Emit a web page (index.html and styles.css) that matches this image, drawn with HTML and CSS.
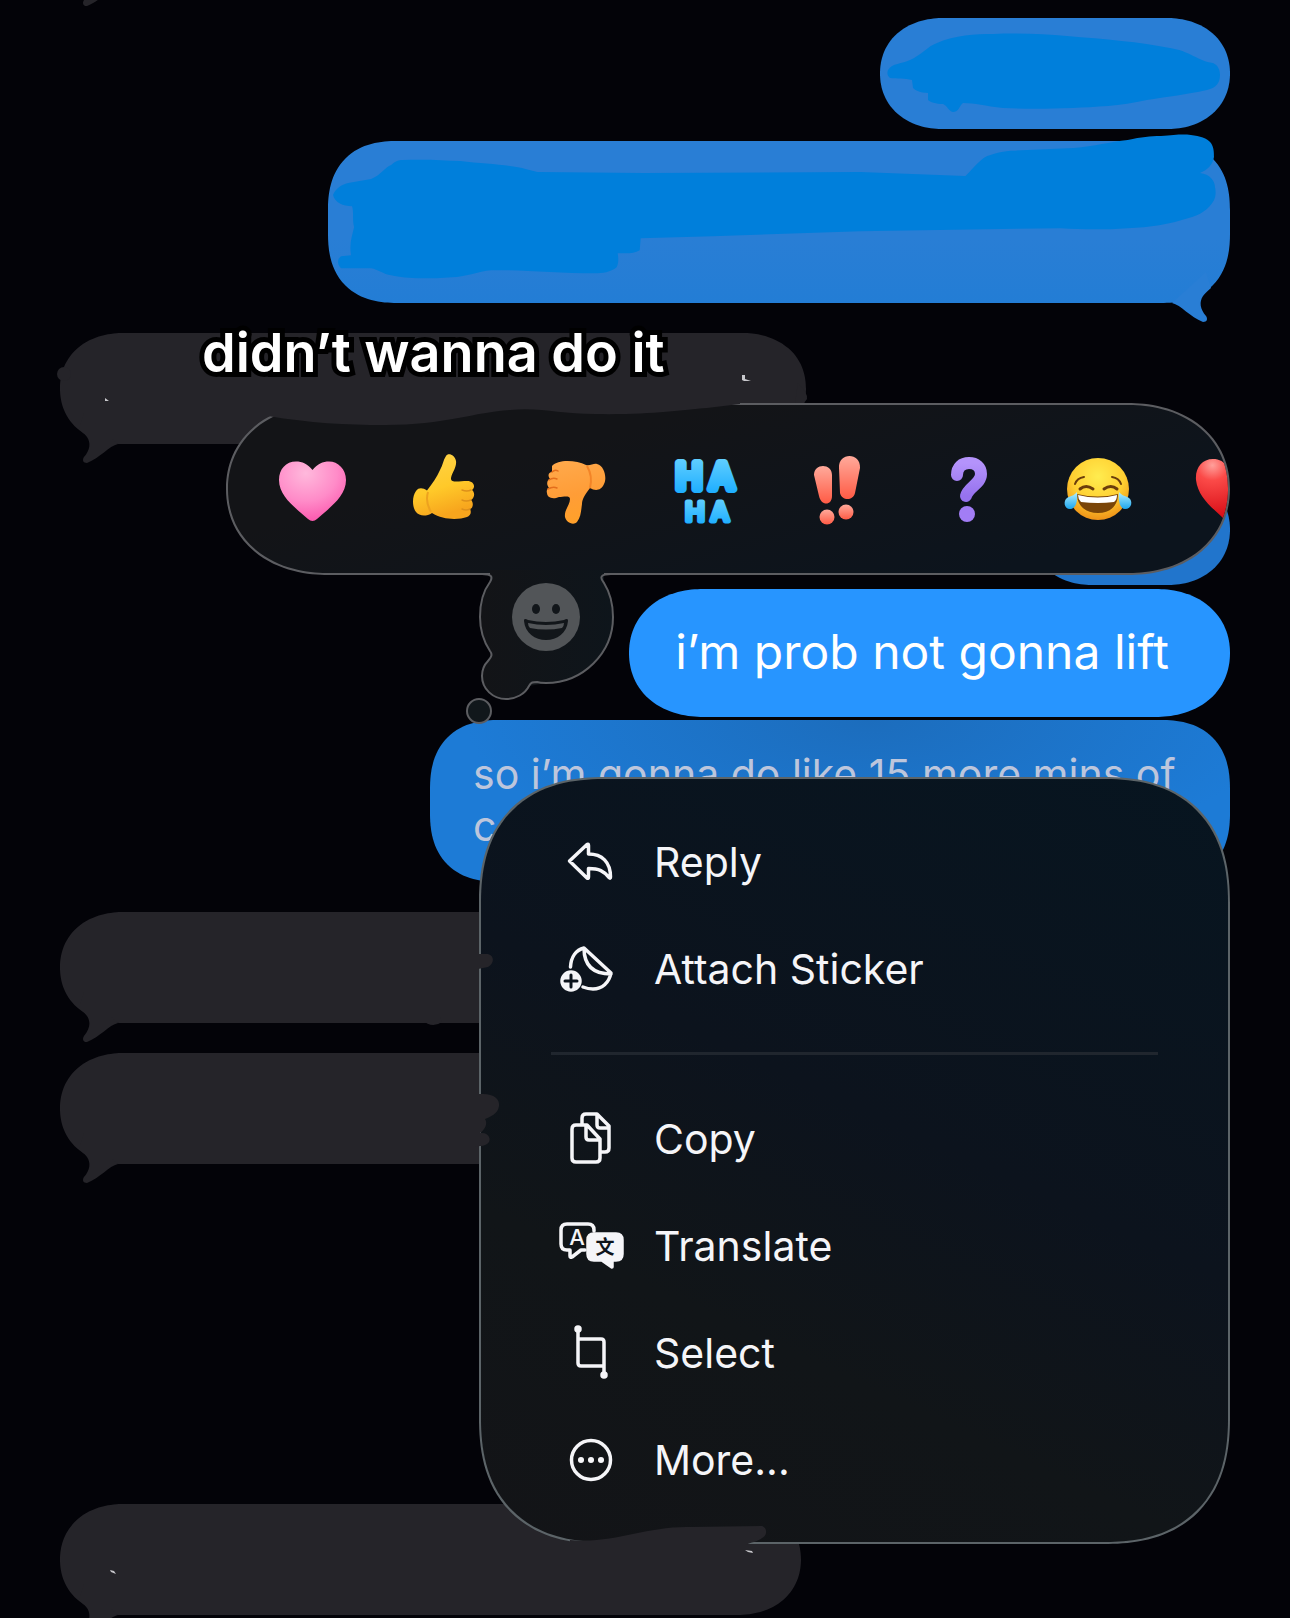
FILE: index.html
```html
<!DOCTYPE html>
<html lang="en">
<head>
    <meta charset="UTF-8">
    <meta name="viewport" content="width=device-width, initial-scale=1.0">
    <title>Messages</title>
    <link rel="stylesheet" href="styles.css">
</head>
<body>
    <!-- Shared tail shape, mirrored for incoming bubbles -->
    <svg class="defs" width="0" height="0" aria-hidden="true">
        <symbol id="tail" viewBox="0 0 60 60">
            <path d="M2 41C11 43 20 55 33 60C37 60 38 57 36 54C30 47 29 40 33 34C35 31 38 29 41 26L36 10Z"/>
        </symbol>
    </svg>

    <main class="chat">
        <svg class="tail tail-top" aria-hidden="true"><use href="#tail"/></svg>

        <div class="bubble out w-short">
            <svg class="scribble" viewBox="0 0 350 110" aria-hidden="true">
                <path d="M8 52C12 45 22 46 30 42C40 38 48 28 57 25C75 17 95 16 113 16C140 15 165 16 187 18C225 21 260 24 290 30C310 33 318 43 333 45C338 47 340 52 340 57C340 65 336 70 327 72C305 77 290 78 267 82C240 88 215 89 193 90C165 91 145 91 123 90C105 88 95 85 83 85C79 88 79 94 73 94C68 93 68 88 63 86C56 86 50 84 48 82V75C40 75 35 72 33 70L32 62C25 60 17 61 10 60C7 57 7 55 8 52Z"/>
            </svg>
        </div>

        <div class="bubble out w-long tall">
            <svg class="scribble" viewBox="0 0 900 162" aria-hidden="true">
                <path d="M5 54C8 47 13 44 20 42L43 38C53 34 57 26 63 24C67 20 71 19 74 19C95 18 114 19 132 20C158 23 186 24 197 28L209 31L315 32L531 31L636 35C645 26 652 16 661 14C675 9 685 10 698 9L744 7C765 5 780 1 798 -1C812 -4 820 -5 831 -5C845 -6 852 -7 861 -6C870 -5 877 -3 881 2C884 7 884 11 884 16C883 24 877 29 870 32C880 33 885 40 885 46C886 50 886 55 884 59C879 68 870 74 858 77C840 83 820 86 798 87C770 89 750 88 731 87L531 90L384 95L312 97L311 109C305 113 297 112 289 112C290 117 290 122 288 126C282 131 274 132 266 132C230 132 190 128 163 129C150 130 136 136 124 136C113 137 104 137 94 137C80 137 72 136 63 134C55 133 50 128 43 127H13C9 123 9 118 13 115L23 114C21 102 24 95 26 86C24 78 26 72 24 65C15 65 7 62 5 54Z"/>
            </svg>
            <svg class="tail" aria-hidden="true"><use href="#tail"/></svg>
        </div>

        <div class="bubble in w-mid spaced">
            <svg class="tail" aria-hidden="true"><use href="#tail"/></svg>
            <svg class="scribble" viewBox="0 0 746 110" aria-hidden="true">
                <path d="M208 83C250 90 285 92 325 92C385 92 415 79 450 77C480 74 500 81 535 81C590 82 620 77 647 75L680 71V50H208Z"/>
                <circle cx="4" cy="41" r="7"/>
                <path d="M738 50Q748 60 747 66L744 70H735Z"/>
                <path class="speck" d="M45 65l4 3h-4zM682 42h3v4l6 2h-7l-2-1z"/>
            </svg>
            <span class="caption">didn’t wanna do it</span>
        </div>

        <div class="bubble out w-tiny spaced"></div>

        <div class="focused">
            <div class="reactions">
                <button aria-label="Love">
                    <svg viewBox="0 0 70 70">
                        <radialGradient id="pink" cx=".4" cy=".2" r=".85"><stop offset="0" stop-color="#ffb9dc"/><stop offset=".55" stop-color="#ff8bc8"/><stop offset="1" stop-color="#fb53ab"/></radialGradient>
                        <path fill="url(#pink)" d="M35.500 16C31 10 25 7.500 19 7.500C9 7.500 2 15 2 26C2 43 20 55 31 65Q35.500 69 40 65C51 55 69 43 69 26C69 15 61 7.500 52 7.500C46 7.500 40 10 35.500 16Z"/>
                    </svg>
                </button>
                <button aria-label="Like">
                    <svg viewBox="0 0 70 70">
                        <linearGradient id="yellow" x1="0" y1="0" x2=".3" y2="1"><stop offset="0" stop-color="#ffd44b"/><stop offset=".6" stop-color="#ffc929"/><stop offset="1" stop-color="#f7a51d"/></linearGradient>
                        <path fill="url(#yellow)" d="M38 2C40-2 47 1 48 7C49 14 43 20 43 25C43 29 52 27 59 27C66 27 68 33 64 36C67 38 67 44 63 46C66 49 65 54 62 55C64 59 62 62 59 63C50 66 35 66 24 59C18 63 11 62 8 58C4 53 4 42 8 37C11 33 15 34 19 36.500C24 30 29 23 32 16C35 11 35 6 38 2Z"/>
                        <path fill="none" stroke="#dd901b" stroke-width="1.500" stroke-linecap="round" d="M54 36Q59 38 63 36M54 46Q58 48 63 46M54 55Q58 57 62 55"/>
                        <path fill="none" stroke="#eda21f" stroke-width="2" d="M20 38Q17 48 23 58"/>
                    </svg>
                </button>
                <button aria-label="Dislike">
                    <svg viewBox="0 0 70 70">
                        <linearGradient id="orange" x1="0" y1="0" x2=".2" y2="1"><stop offset="0" stop-color="#ffaa4d"/><stop offset=".6" stop-color="#ff9d37"/><stop offset="1" stop-color="#ffa02b"/></linearGradient>
                        <path fill="url(#orange)" d="M13 12C19 5 37 6 47 11C51 12 55 9 58 10C66 12 68 25 65 30C62 37 56 37 51 34C47 39 43 45 43 50C42 57 42 63 38 68C34 72 27 68 26 63C25 56 31 51 31 45C31 41 24 43 20 43C13 46 8 43 8 39C7 36 9 34 10 34C7 30 8 26 11 25C8 21 10 18 13 18Z"/>
                        <path fill="none" stroke="#e36e1c" stroke-width="1.500" stroke-linecap="round" d="M13 18Q16 15 19 17M10 26Q14 23 18 25M9 35Q14 32 18 34"/>
                        <path fill="none" stroke="#f38427" stroke-width="2" d="M48 12Q54 22 51 34"/>
                    </svg>
                </button>
                <button aria-label="Laugh">
                    <svg class="haha" viewBox="0 0 70 70">
                        <linearGradient id="sky" x1="0" y1="0" x2="0" y2="1"><stop offset="0" stop-color="#68d2ff"/><stop offset="1" stop-color="#16aaff"/></linearGradient>
                        <text x="19 52" y="35" font-size="35">HA</text>
                        <text class="small" x="25 50" y="67" font-size="26">HA</text>
                    </svg>
                </button>
                <button aria-label="Emphasize">
                    <svg viewBox="0 0 70 70">
                        <linearGradient id="coral" x1="0" y1="0" x2="0" y2="1"><stop offset="0" stop-color="#ffaa9b"/><stop offset="1" stop-color="#ff5b45"/></linearGradient>
                        <g fill="url(#coral)">
                            <path d="M13 21C13 9 31 9 31 21V42C31 52 20 52 18 42Z"/>
                            <path d="M38 14C37-2 60-2 59 14L54 39C52 47 41 47 39 39Z"/>
                            <circle cx="26" cy="63" r="7.500"/><circle cx="45" cy="58" r="7.500"/>
                        </g>
                    </svg>
                </button>
                <button aria-label="Question">
                    <svg viewBox="0 0 70 70">
                        <linearGradient id="violet" x1="0" y1="0" x2="0" y2="1"><stop offset="0" stop-color="#b493fb"/><stop offset="1" stop-color="#9672ee"/></linearGradient>
                        <path fill="none" stroke="url(#violet)" stroke-width="12" stroke-linecap="round" d="M25 21C25 13 30 9 37 9C44 9 49 13 49 20C49 30 36 33 34 42"/>
                        <circle fill="#a27df5" cx="35" cy="60" r="8"/>
                    </svg>
                </button>
                <button aria-label="Tears of joy">
                    <svg viewBox="0 0 70 70">
                        <radialGradient id="face" cx=".5" cy=".3" r=".7"><stop offset="0" stop-color="#ffec4f"/><stop offset=".6" stop-color="#ffcf31"/><stop offset="1" stop-color="#ee9218"/></radialGradient>
                        <linearGradient id="tear" x1="0" y1="0" x2="0" y2="1"><stop offset="0" stop-color="#b5f1ff"/><stop offset="1" stop-color="#1ba6ef"/></linearGradient>
                        <circle fill="url(#face)" cx="35" cy="35" r="31"/>
                        <g fill="none" stroke="#6b3d0b" stroke-width="2" stroke-linecap="round">
                            <path d="M12 30Q14 24 21 23M49 23Q56 24 58 30"/>
                            <path stroke-width="3" d="M17 35Q23 30 30 35M41 35Q48 30 54 35"/>
                        </g>
                        <path fill="#7a4508" d="M14 40Q35 45 55 40C55 52 47 59 35 59C23 59 14 52 14 40Z"/>
                        <path fill="#fff" d="M15 41Q35 46 54 41Q54 46 51 48Q35 50 18 48Q15 45 15 41Z"/>
                        <path fill="url(#tear)" d="M14 38C15 47 13 55 7 55C1 55 0 47 4 44C7 42 11 42 14 38ZM56 38C55 47 57 55 62 55C69 55 70 47 66 44C63 42 59 42 56 38Z"/>
                    </svg>
                </button>
                <button aria-label="Heart">
                    <svg viewBox="0 0 70 70">
                        <radialGradient id="red" cx=".25" cy=".1" r=".8"><stop offset="0" stop-color="#ffa09b"/><stop offset=".3" stop-color="#fb4a48"/><stop offset="1" stop-color="#da1119"/></radialGradient>
                        <path fill="url(#red)" d="M35 16C31 8 26 5 19 5C8 5 1 14 2 26C4 44 20 55 31 66Q35 70 39 66C50 55 66 44 68 26C69 14 62 5 51 5C44 5 39 8 35 16Z"/>
                    </svg>
                </button>
            </div>

            <button class="thought" aria-label="Add emoji">
                <svg viewBox="0 0 160 160">
                    <linearGradient id="glass" x1="0" y1="0" x2="1" y2="0"><stop offset="0" stop-color="#131417"/><stop offset="1" stop-color="#0e151b"/></linearGradient>
                    <path fill="url(#glass)" d="M30 0H144V12C149 21 153 33 153 47C153 83 123 113 86 113L69 116C65 124 56 129 46 129C33 129 22 119 22 106C22 100 25 93 31 86V81C24 72 20 61 20 47C20 32 24 20 30 12Z"/>
                    <path class="rim" d="M22 4C32 4 33 7 30 12C24 20 20 32 20 47C20 60 24 72 30 81C33 85 31 87 28 91C24 95 22 100 22 106C22 119 33 129 46 129C56 129 65 124 69 116C71 112 73 112 77 112C80 113 83 113 86 113C123 113 153 83 153 47C153 33 149 21 144 13C139 7 141 4 151 4"/>
                    <circle class="rim" fill="#11171b" cx="19" cy="141" r="12"/>
                    <circle fill="#525558" cx="86" cy="47" r="34"/>
                    <ellipse fill="#12161a" cx="76" cy="39" rx="4" ry="5"/>
                    <ellipse fill="#12161a" cx="96" cy="39" rx="4" ry="5"/>
                    <path fill="#12161a" d="M64 51C64 48 66 49 68 50Q86 54 104 50C106 49 108 48 108 51C107 63 97 70 86 70C75 70 65 63 64 51Z"/>
                    <path fill="#525558" d="M68 53Q86 57 104 53Q104 56 102 58Q86 61 70 58Q68 56 68 53Z"/>
                </svg>
            </button>

            <div class="bubble out active">i’m prob not gonna lift</div>

            <div class="menu">
                <button>
                    <svg viewBox="0 0 64 64"><path d="M11.500 31L29 14.500Q30.500 13.500 30.500 15.500V24C44 24 52.500 32 52.500 47Q52.500 49 51 47.500C46 41 41 38.500 30.500 38.500V47Q30.500 49 29 48Z"/></svg>
                    Reply
                </button>
                <button>
                    <svg viewBox="0 0 64 64">
                        <path d="M12.500 30C13 20 18 13 26 11L53 36C51 46 44 52 35 52Q30 52 25 50M26 11C26 28 35 37 53 37"/>
                        <circle class="solid" cx="13" cy="44" r="9"/>
                        <path class="cut" d="M13 38V50M7 44H19"/>
                    </svg>
                    Attach Sticker
                </button>
                <hr>
                <button>
                    <svg viewBox="0 0 64 64">
                        <path d="M28 18H18Q14 18 14 22V51Q14 55 18 55H38Q42 55 42 51V32L29 18ZM28 18V30Q28 33 31 33H42"/>
                        <path d="M24 17V11Q24 7 28 7H39L51 19V41Q51 45 47 45H43M39 7V18Q39 21 42 21H51"/>
                    </svg>
                    Copy
                </button>
                <button>
                    <svg viewBox="0 0 64 64">
                        <path d="M27 36H23L14 43Q12 44 12 42V36H9Q3 36 3 30V16Q3 10 9 10H30Q36 10 36 16V17"/>
                        <path class="solid" d="M36 20H58Q64 20 64 26V40Q64 46 58 46H54V53L44 46H36Q30 46 30 40V26Q30 20 36 20Z"/>
                        <text class="latin" x="19" y="31">A</text>
                        <text class="han" x="47" y="40">文</text>
                    </svg>
                    Translate
                </button>
                <button>
                    <svg viewBox="0 0 64 64">
                        <path d="M20 8V42Q20 45 23 45H46M20 18H43Q46 18 46 21V54"/>
                        <circle class="solid" cx="20" cy="8" r="2"/>
                        <circle class="solid" cx="46" cy="54" r="2"/>
                    </svg>
                    Select
                </button>
                <button>
                    <svg viewBox="0 0 64 64">
                        <circle cx="33" cy="32" r="19.500"/>
                        <g class="solid"><circle cx="23" cy="32" r="1.300"/><circle cx="33" cy="32" r="1.300"/><circle cx="43" cy="32" r="1.300"/></g>
                    </svg>
                    More...
                </button>
            </div>
        </div>

        <div class="bubble out dimmed">so i’m gonna do like 15 more mins of<br>c</div>

        <div class="bubble in w-half spaced">
            <svg class="tail" aria-hidden="true"><use href="#tail"/></svg>
            <svg class="scribble" viewBox="0 0 500 110" aria-hidden="true">
                <path d="M410 42H428C435 44 434 52 428 55L418 57H410ZM362 108Q372 117 382 110L380 105H362Z"/>
            </svg>
        </div>

        <div class="bubble in w-half spaced">
            <svg class="tail" aria-hidden="true"><use href="#tail"/></svg>
            <svg class="scribble" viewBox="0 0 500 110" aria-hidden="true">
                <path d="M410 41H423C434 41 440 46 439 53C438 61 430 64 425 66C428 70 425 77 420 80C430 79 432 88 427 91C423 94 417 93 410 93Z"/>
            </svg>
        </div>

        <div class="bubble in w-last last">
            <svg class="tail" aria-hidden="true"><use href="#tail"/></svg>
            <svg class="scribble" viewBox="0 0 741 110" aria-hidden="true">
                <path d="M510 36C555 40 585 22 630 23L702 22C708 24 707 32 702 34C698 38 690 38 686 41V50H510Z"/>
                <path class="speck" d="M50 66l4 1 2 3-5-2zM685 46l7 1 1 2-5-1z"/>
            </svg>
        </div>
    </main>
</body>
</html>
```

FILE: styles.css
```css
* {
    box-sizing: border-box;
}

body {
    margin: 0;
    height: 100vh;
    overflow: hidden;
    background: #030308;
    color: #fff;
    font-family: Inter, "Liberation Sans", sans-serif;
}

button {
    padding: 0;
    border: none;
    background: none;
    color: inherit;
    font: inherit;
    cursor: pointer;
}

.defs {
    position: absolute;
}

.chat {
    position: relative;
    display: flex;
    flex-direction: column;
    padding: 18px 60px 0;
}

.bubble {
    position: relative;
    min-height: 111px;
    max-width: 100%;
    border-radius: 58px / 56px;
}

.out {
    align-self: flex-end;
    background: #297ed5;
    color: #297ed5;
}

.in {
    align-self: flex-start;
    background: #252429;
    color: #252429;
}

.w-tiny { width: 200px; background: #2175cc; }
.w-short { width: 350px; }
.w-half { width: 500px; }
.w-last { width: 741px; }
.w-mid { width: 746px; }
.w-long { width: 902px; }

.tall {
    min-height: 162px;
    margin-top: 12px;
    border-radius: 60px;
    background: linear-gradient(#297ed5 60%, #237dd5);
}

.spaced {
    margin-top: 30px;
}

.last {
    margin-top: 340px;
}

.tail {
    position: absolute;
    right: 0;
    bottom: -19px;
    width: 60px;
    height: 60px;
    fill: currentColor;
}

.in .tail {
    right: auto;
    left: 0;
    transform: scaleX(-1);
}

.tail-top {
    top: -54px;
    left: 60px;
    right: auto;
    bottom: auto;
    transform: scaleX(-1);
    color: #252429;
}

.scribble {
    position: absolute;
    inset: 0;
    width: 100%;
    overflow: visible;
    fill: #007fdb;
}

.in .scribble {
    z-index: 3;
    fill: #252429;
}

.scribble .speck {
    fill: #c8c8cc;
}

.caption {
    position: absolute;
    z-index: 4;
    top: -12px;
    left: 142px;
    color: #fff;
    font-size: 54px;
    font-weight: 600;
    line-height: 64px;
    white-space: nowrap;
    -webkit-text-stroke: 10px #000;
    paint-order: stroke fill;
    stroke-linejoin: round;
}

/* Pressed message with its reaction bar and menu */
.focused {
    position: relative;
    align-self: flex-end;
    margin: 4px 0 3px;
}

.active {
    min-height: 128px;
    padding: 31px 61px 33px 46px;
    border-radius: 68px / 64px;
    background: #2795ff;
    color: #fff;
    font-size: 48px;
    line-height: 64px;
    white-space: nowrap;
}

.dimmed {
    width: 800px;
    padding: 28px 43px 30px;
    border-radius: 60px;
    background: radial-gradient(ellipse at 55% 0, #1c6dbd, #1d7bd6 65%);
    color: #bdc6dc;
    font-size: 41px;
    line-height: 52px;
    white-space: nowrap;
}

.reactions {
    position: absolute;
    z-index: 1;
    right: 0;
    bottom: calc(100% + 14px);
    display: flex;
    align-items: center;
    gap: 61px;
    width: 1004px;
    height: 172px;
    padding-left: 49px;
    overflow: hidden;
    border: 2px solid #5c5d61;
    border-radius: 90px / 86px;
    background: linear-gradient(165deg, #131417 30%, #0c141d 85%);
}

.reactions button {
    flex: none;
    width: 70px;
    height: 70px;
}

.reactions svg {
    display: block;
    overflow: visible;
}

.haha text {
    fill: url(#sky);
    stroke: url(#sky);
    stroke-width: 8px;
    stroke-linejoin: round;
    font-weight: 500;
    text-anchor: middle;
}

.haha .small {
    stroke-width: 5px;
}

.thought {
    position: absolute;
    z-index: 2;
    top: -19px;
    right: 610px;
    width: 160px;
    height: 160px;
}

.thought svg {
    display: block;
}

.rim {
    fill: none;
    stroke: #5c5d61;
    stroke-width: 2px;
}

circle.rim {
    fill: #11171b;
}

.menu {
    position: absolute;
    z-index: 2;
    top: calc(100% + 60px);
    right: 0;
    display: flex;
    flex-direction: column;
    width: 751px;
    padding: 29px 70px;
    border: 2px solid #5c6468;
    border-radius: 104px;
    background: linear-gradient(205deg, #071520, #0c131d 45%, #111518 70%, #131417);
    color: #f5f5f8;
    font-size: 41px;
}

/* Continuous corners where the browser knows them */
@supports (corner-shape: superellipse(1.25)) {
    .bubble,
    .reactions {
        corner-shape: superellipse(1.1);
    }

    .tall,
    .dimmed,
    .menu {
        corner-shape: superellipse(1.25);
    }

    .bubble {
        border-radius: 64px / 56px;
    }

    .tall,
    .dimmed {
        border-radius: 69px;
    }

    .active {
        border-radius: 74px / 64px;
    }

    .reactions {
        border-radius: 102px / 86px;
    }

    .menu {
        border-radius: 126px;
    }
}

.menu button {
    display: flex;
    align-items: center;
    gap: 32px;
    height: 107px;
    padding-left: 7px;
    text-align: left;
}

.menu hr {
    width: 100%;
    height: 3px;
    margin: 30px 0;
    border: none;
    background: #20262e;
}

.menu svg {
    width: 64px;
    height: 64px;
    overflow: visible;
    fill: none;
    stroke: currentColor;
    stroke-width: 3.5;
    stroke-linecap: round;
    stroke-linejoin: round;
}

.menu .solid {
    fill: currentColor;
}

.menu .cut {
    stroke: #0c131c;
    stroke-width: 3;
}

.menu text {
    stroke: none;
    text-anchor: middle;
}

.menu .latin {
    fill: currentColor;
    font-size: 22px;
    font-weight: 500;
}

.menu .han {
    fill: #0e141b;
    font-family: "Noto Sans CJK SC", sans-serif;
    font-size: 19px;
    font-weight: 700;
}
```
